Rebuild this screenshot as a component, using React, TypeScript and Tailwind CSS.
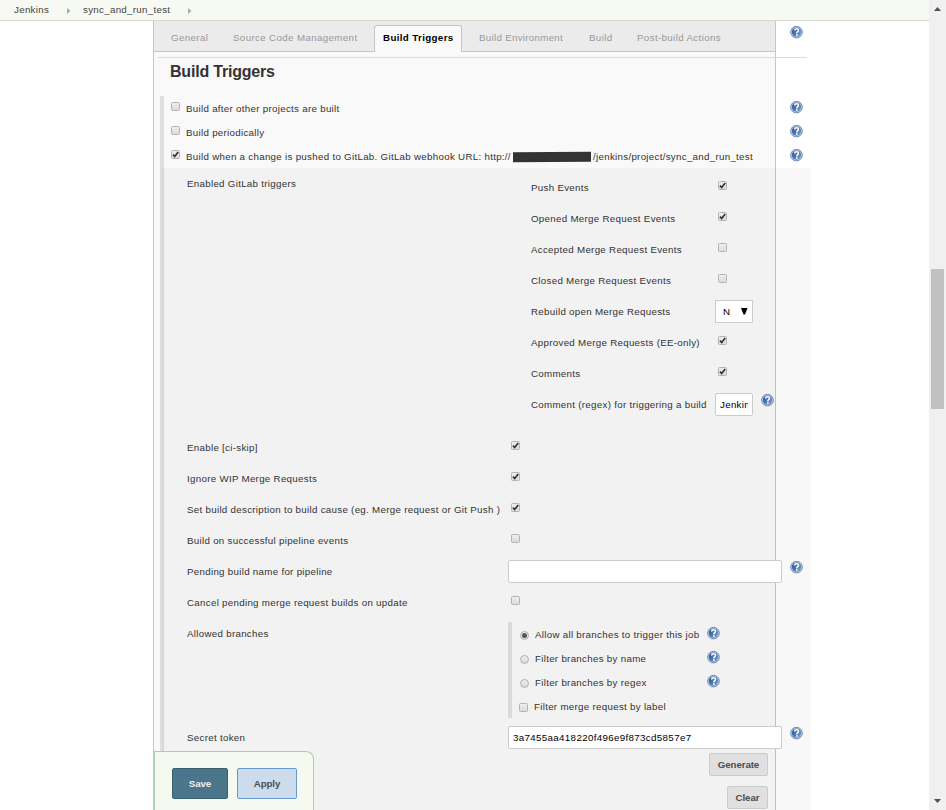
import type { ReactNode } from 'react';

function Help({ className = '' }: { className?: string }) {
  return (
    <svg viewBox="0 0 13 13" className={`block h-[13px] w-[13px] shrink-0 ${className}`}>
      <defs>
        <linearGradient id="helpFill" x1="0" y1="0" x2="1" y2="1">
          <stop offset="0" stopColor="#2a5597" />
          <stop offset="0.5" stopColor="#4a74b0" />
          <stop offset="1" stopColor="#86a8d4" />
        </linearGradient>
      </defs>
      <circle cx="6.5" cy="6.1" r="5.8" fill="#c9d5e8" stroke="#5c7cae" strokeWidth="0.9" />
      <circle cx="6.5" cy="6.1" r="4.7" fill="url(#helpFill)" />
      <path d="M4.7 4.5C4.7 2.2 8.6 2.3 8.5 4.4C8.4 5.7 6.8 5.7 6.7 7.4" fill="none" stroke="#fff" strokeWidth="1.5" />
      <rect x="6" y="8.2" width="1.6" height="1.6" fill="#fff" />
    </svg>
  );
}

function Check({ on = false, className = '' }: { on?: boolean; className?: string }) {
  return (
    <span className={`block h-[9px] w-[9px] shrink-0 rounded-[1.5px] border border-[#b3b3b3] bg-linear-to-b from-[#eeeeee] to-[#dcdcdc] ${className}`}>
      {on && (
        <svg viewBox="0 0 7 7" className="block h-[7px] w-[7px] overflow-visible">
          <path d="M1 3.6L2.7 5.5L6.2 0.9" fill="none" stroke="#333" strokeWidth="1.7" />
        </svg>
      )}
    </span>
  );
}

function Radio({ on = false }: { on?: boolean }) {
  return (
    <span className="mt-[9px] flex h-[9px] w-[9px] shrink-0 items-center justify-center rounded-full border border-[#b0b0b0] bg-linear-to-b from-[#eeeeee] to-[#dcdcdc]">
      {on && <span className="block h-[5px] w-[5px] rounded-full bg-[#555]" />}
    </span>
  );
}

function Trigger({ on, children }: { on?: boolean; children: ReactNode }) {
  return (
    <div className="flex h-6 w-[651px] items-start">
      <Check on={on} className="mt-1.5 ml-[7px]" />
      <div className="mt-[5px] ml-[6px] flex w-[604px] leading-4">{children}</div>
      <Help className="mt-[5px]" />
    </div>
  );
}

function Row({ label, children }: { label: string; children?: ReactNode }) {
  return (
    <div className="flex h-[31px] items-start">
      <span className="mt-2 w-[321px] shrink-0 leading-4">{label}</span>
      {children}
    </div>
  );
}

function EventRow({ label, children }: { label: string; children: ReactNode }) {
  return (
    <div className="flex h-[31px] items-start">
      <span className="mt-2 w-[184px] shrink-0 leading-4">{label}</span>
      {children}
    </div>
  );
}

function Branch({ label, on }: { label: string; on?: boolean }) {
  return (
    <div className="flex h-6 items-start pl-2">
      <Radio on={on} />
      <span className="mt-[5px] ml-[6px] w-[172px] leading-4">{label}</span>
      <Help className="mt-[5px]" />
    </div>
  );
}

const field = 'h-[23px] shrink-0 rounded-[2px] border border-[#ccc] bg-white text-black leading-[22px]';
const grayButton = 'h-[23px] rounded-[2px] border border-[#ccc] bg-[#e0e0e0] text-center font-bold leading-[22px] tracking-[-0.12px] text-[#4d4d4d]';

export default function App() {
  return (
    <div className="flex h-[810px] w-[946px] overflow-hidden bg-white font-['Liberation_Sans',Arial,sans-serif] text-[9.75px] tracking-[0.29px] whitespace-nowrap text-[#333]">
      <div className="flex w-[929px] flex-col">
        <header className="flex h-[21px] shrink-0 items-start border-b border-[#d3d9d0] bg-[#f6faf2] pl-[14px] leading-[19px] text-[#444]">
          <span className="w-[53px]">Jenkins</span>
          <svg viewBox="0 0 4 6" className="mt-2 h-[6px] w-[4px]"><path d="M0 0L3.5 3L0 6Z" fill="#aaa" /></svg>
          <span className="ml-3 w-[105px]">sync_and_run_test</span>
          <svg viewBox="0 0 4 6" className="mt-2 h-[6px] w-[4px]"><path d="M0 0L3.5 3L0 6Z" fill="#aaa" /></svg>
        </header>

        <div className="flex grow">
          <main className="relative ml-[153px] flex h-[789px] w-[623px] shrink-0 flex-col border-x border-[#c6c6c6] bg-[#f9f9f9]">
            <nav className="flex h-[31px] shrink-0 items-start border-b border-[#c6c6c6] bg-[#ebebeb] pl-[17px] leading-[33px] tracking-[0.36px] text-[#999]">
              <span className="w-[62px] shrink-0">General</span>
              <span className="w-[141px] shrink-0">Source Code Management</span>
              <span className="mt-1 h-[27px] w-[88px] shrink-0 rounded-t-[3px] border border-b-0 border-[#c6c6c6] bg-[#f9f9f9] pl-2 leading-[24px] font-bold text-black">Build Triggers</span>
              <span className="ml-[17px] w-[110px] shrink-0 tracking-[0.29px]">Build Environment</span>
              <span className="w-[48px] shrink-0">Build</span>
              <span className="w-[153px] shrink-0">Post-build Actions</span>
              <Help className="mt-[5px]" />
            </nav>
            <div className="mt-[5px] ml-1 h-px w-[649px] shrink-0 bg-[#dadada]" />
            <h1 className="mt-1 ml-4 h-[34px] shrink-0 text-[16px] leading-[20px] font-bold tracking-[-0.2px]">Build Triggers</h1>

            <section className="ml-[6px] flex h-[720px] w-[651px] shrink-0 flex-col">
              <div className="flex h-[714px] w-[651px] shrink-0 border-l-4 border-[#dfdfdf]">
                <div className="flex flex-col">
                  <Trigger>Build after other projects are built</Trigger>
                  <Trigger>Build periodically</Trigger>
                  <Trigger on>
                    <span className="w-[327px] shrink-0">Build when a change is pushed to GitLab. GitLab webhook URL: http://</span>
                    <span className="mt-[3px] h-[10px] w-[78px] shrink-0 -skew-y-[0.5deg] bg-[#333]" />
                    <span className="ml-[2px]">/jenkins/project/sync_and_run_test</span>
                  </Trigger>

                  <div className="-ml-[2px] flex h-[642px] w-[649px] flex-col bg-black/[0.027] pl-[25px]">
                    <div className="flex h-[264px] items-start pt-1">
                      <span className="mt-1 w-[344px] leading-4">Enabled GitLab triggers</span>
                      <div className="flex flex-col">
                        <EventRow label="Push Events"><Check on className="mt-[9px] ml-[3px]" /></EventRow>
                        <EventRow label="Opened Merge Request Events"><Check on className="mt-[9px] ml-[3px]" /></EventRow>
                        <EventRow label="Accepted Merge Request Events"><Check className="mt-[9px] ml-[3px]" /></EventRow>
                        <EventRow label="Closed Merge Request Events"><Check className="mt-[9px] ml-[3px]" /></EventRow>
                        <EventRow label="Rebuild open Merge Requests">
                          <div className="mt-1 flex h-[23px] w-[38px] shrink-0 border border-[#ccc] bg-white pl-[7px] leading-[22px] text-black">
                            <span className="w-[18px]">N</span>
                            <svg viewBox="0 0 7 7" className="mt-[7px] h-[7px] w-[7px]"><path d="M0 0H6.5L4 6.5H2.5Z" /></svg>
                          </div>
                        </EventRow>
                        <EventRow label="Approved Merge Requests (EE-only)"><Check on className="mt-[9px] ml-[3px]" /></EventRow>
                        <EventRow label="Comments"><Check on className="mt-[9px] ml-[3px]" /></EventRow>
                        <EventRow label="Comment (regex) for triggering a build">
                          <div className={`${field} mt-1 w-[38px] px-1`}><span className="block w-[28px] overflow-hidden">Jenkins</span></div>
                          <Help className="mt-[5px] ml-2" />
                        </EventRow>
                      </div>
                    </div>

                    <Row label="Enable [ci-skip]"><Check on className="mt-[9px] ml-[3px]" /></Row>
                    <Row label="Ignore WIP Merge Requests"><Check on className="mt-[9px] ml-[3px]" /></Row>
                    <Row label="Set build description to build cause (eg. Merge request or Git Push )"><Check on className="mt-[9px] ml-[3px]" /></Row>
                    <Row label="Build on successful pipeline events"><Check className="mt-[9px] ml-[3px]" /></Row>
                    <Row label="Pending build name for pipeline">
                      <div className={`${field} mt-1 w-[274px]`} />
                      <Help className="mt-[5px] ml-2" />
                    </Row>
                    <Row label="Cancel pending merge request builds on update"><Check className="mt-[9px] ml-[3px]" /></Row>

                    <div className="flex h-[104px] items-start">
                      <span className="mt-2 w-[321px] shrink-0 leading-4">Allowed branches</span>
                      <div className="mt-1 flex h-24 flex-col border-l-4 border-[#dadada]">
                        <Branch on label="Allow all branches to trigger this job" />
                        <Branch label="Filter branches by name" />
                        <Branch label="Filter branches by regex" />
                        <div className="flex h-6 items-start pl-[7px]">
                          <Check className="mt-[9px]" />
                          <span className="mt-[5px] ml-[6px] leading-4">Filter merge request by label</span>
                        </div>
                      </div>
                    </div>

                    <Row label="Secret token">
                      <div className={`${field} mt-1 w-[274px] pl-1 tracking-[0.34px]`}>3a7455aa418220f496e9f873cd5857e7</div>
                      <Help className="mt-[5px] ml-2" />
                    </Row>
                    <div className="flex w-[581px] flex-col items-end gap-[10px]">
                      <div className={`${grayButton} w-[59px]`}>Generate</div>
                      <div className={`${grayButton} w-[41px]`}>Clear</div>
                    </div>
                  </div>
                </div>
              </div>
            </section>

            <div className="absolute bottom-0 left-0 flex h-[59px] w-[160px] gap-[9px] rounded-tr-[8px] border border-b-0 border-[#a8cfb6] bg-[#f5f9ef]/97 pt-4 pl-[17px] text-center leading-[30px] font-bold tracking-[-0.12px]">
              <div className="h-[31px] w-[56px] rounded-[2px] border border-[#38606f] bg-[#4b758b] text-[#eee]">Save</div>
              <div className="h-[31px] w-[60px] rounded-[2px] border border-[#6699cc] bg-[#ccdcec] text-[#4d4d4d]">Apply</div>
            </div>
          </main>
        </div>
      </div>

      <aside className="flex w-[17px] flex-col items-center bg-[#f0f0f0]">
        <svg viewBox="0 0 7 4" className="mt-[7px] h-[4px] w-[7px]"><path d="M0 4L3.5 0L7 4Z" fill="#505050" /></svg>
        <div className="mt-[258px] h-[140px] w-[13px] bg-[#c1c1c1]" />
        <svg viewBox="0 0 7 4" className="mt-[390px] h-[4px] w-[7px]"><path d="M0 0L3.5 4L7 0Z" fill="#505050" /></svg>
      </aside>
    </div>
  );
}
